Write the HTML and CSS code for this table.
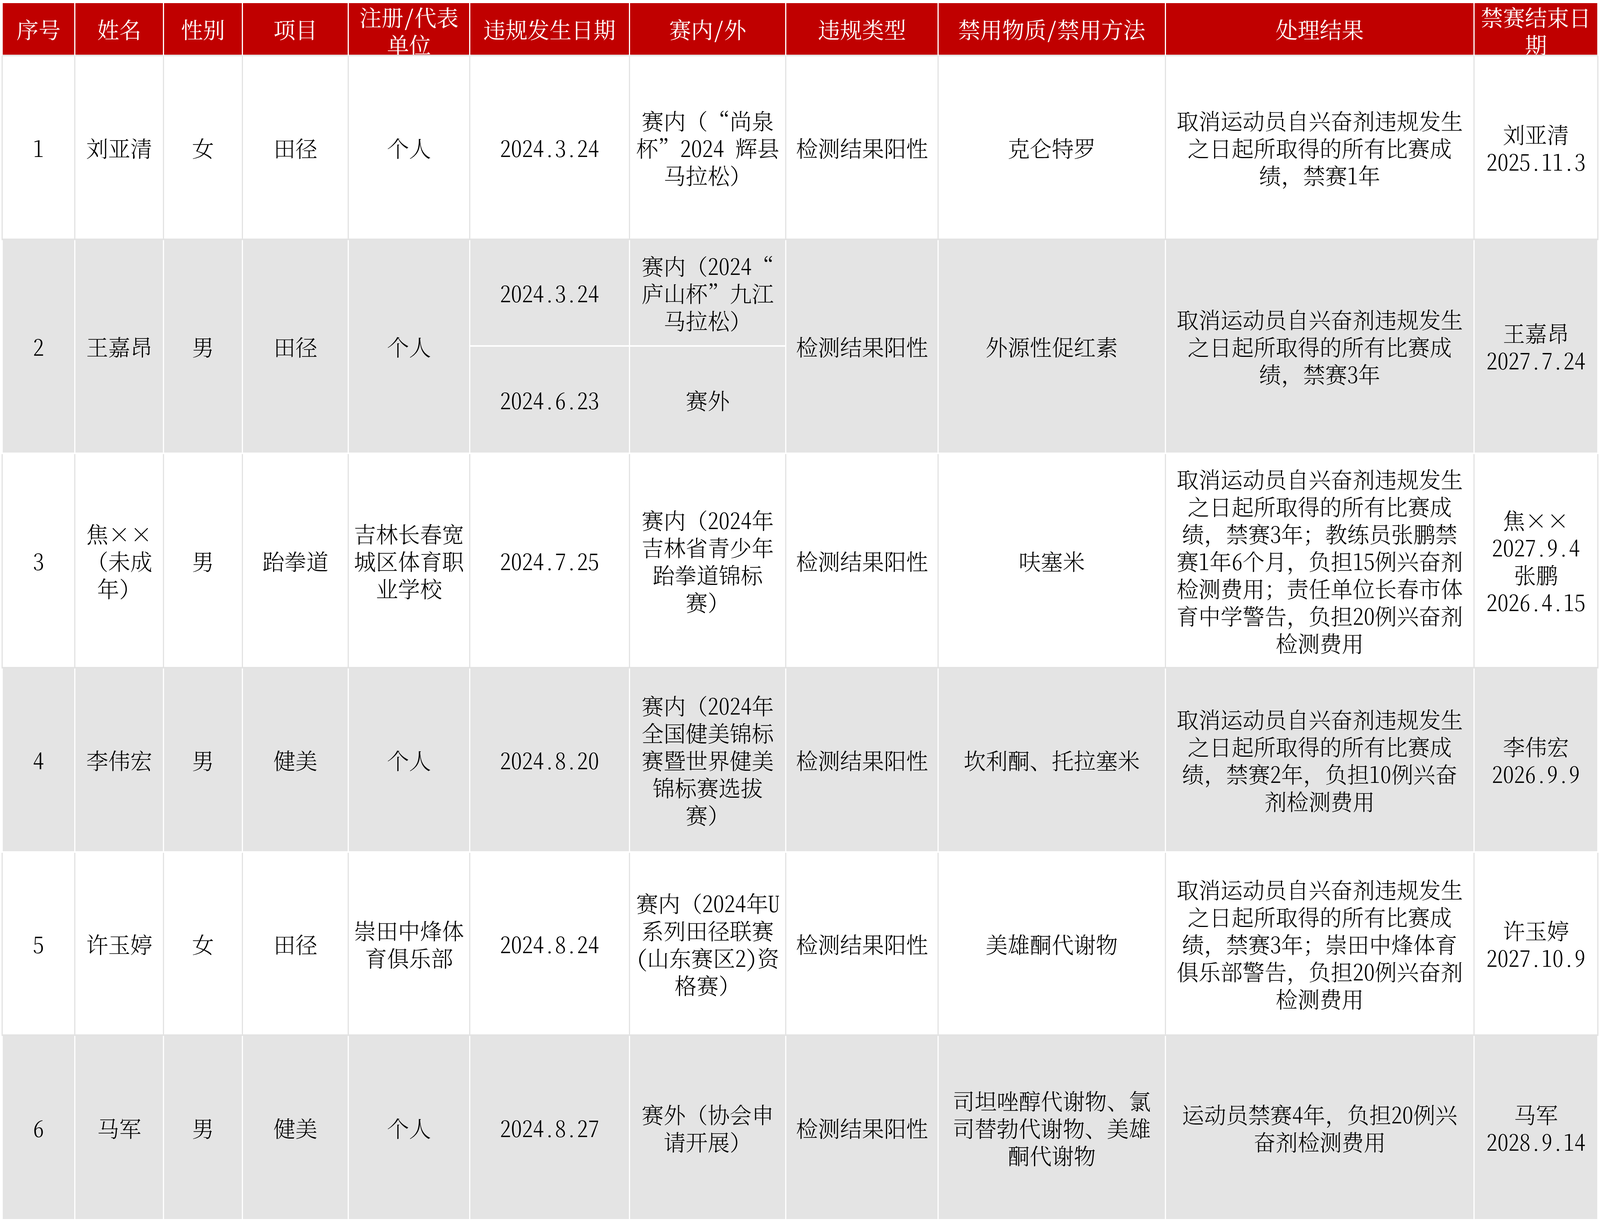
FILE: index.html
```html
<!DOCTYPE html>
<html lang="zh-CN">
<head>
<meta charset="utf-8">
<title>兴奋剂违规处理结果</title>
<link rel="stylesheet" href="styles.css">
</head>
<body>
<div class="sheet" role="table">
  <div class="row hd" role="row">
    <div class="c" role="columnheader"><p>序号</p></div>
    <div class="c" role="columnheader"><p>姓名</p></div>
    <div class="c" role="columnheader"><p>性别</p></div>
    <div class="c" role="columnheader"><p>项目</p></div>
    <div class="c hw" role="columnheader"><p>注册/代表单位</p></div>
    <div class="c" role="columnheader"><p>违规发生日期</p></div>
    <div class="c hw" role="columnheader"><p>赛内/外</p></div>
    <div class="c" role="columnheader"><p>违规类型</p></div>
    <div class="c hw" role="columnheader"><p>禁用物质/禁用方法</p></div>
    <div class="c res" role="columnheader"><p>处理结果</p></div>
    <div class="c" role="columnheader"><p>禁赛结束日期</p></div>
  </div>

  <div class="row w" role="row">
    <div class="c hw" role="cell"><p>1</p></div>
    <div class="c" role="cell"><p>刘亚清</p></div>
    <div class="c" role="cell"><p>女</p></div>
    <div class="c" role="cell"><p>田径</p></div>
    <div class="c" role="cell"><p>个人</p></div>
    <div class="c hw" role="cell"><p>2024.3.24</p></div>
    <div class="c" role="cell"><p>赛内（“尚泉杯”<span class="hw">2024 </span>辉县马拉松）</p></div>
    <div class="c" role="cell"><p>检测结果阳性</p></div>
    <div class="c" role="cell"><p>克仑特罗</p></div>
    <div class="c res" role="cell"><p>取消运动员自兴奋剂违规发生之日起所取得的所有比赛成绩，禁赛<span class="hw">1</span>年</p></div>
    <div class="c hw" role="cell"><p>刘亚清<br>2025.11.3</p></div>
  </div>

  <div class="row g" role="row">
    <div class="c hw span2" role="cell"><p>2</p></div>
    <div class="c span2" role="cell"><p>王嘉昂</p></div>
    <div class="c span2" role="cell"><p>男</p></div>
    <div class="c span2" role="cell"><p>田径</p></div>
    <div class="c span2" role="cell"><p>个人</p></div>
    <div class="c hw" role="cell"><p>2024.3.24</p></div>
    <div class="c" role="cell"><p>赛内（<span class="hw">2024</span>“<wbr>庐山杯”九江马拉松）</p></div>
    <div class="c span2" role="cell"><p>检测结果阳性</p></div>
    <div class="c span2" role="cell"><p>外源性促红素</p></div>
    <div class="c res span2" role="cell"><p>取消运动员自兴奋剂违规发生之日起所取得的所有比赛成绩，禁赛<span class="hw">3</span>年</p></div>
    <div class="c hw span2" role="cell"><p>王嘉昂<br>2027.7.24</p></div>
    <div class="c hw" role="cell"><p>2024.6.23</p></div>
    <div class="c" role="cell"><p>赛外</p></div>
  </div>

  <div class="row w" role="row">
    <div class="c hw" role="cell"><p>3</p></div>
    <div class="c" role="cell"><p>焦<span class="fw">×</span><span class="fw">×</span>（未成年）</p></div>
    <div class="c" role="cell"><p>男</p></div>
    <div class="c" role="cell"><p>跆拳道</p></div>
    <div class="c" role="cell"><p>吉林长春宽城区体育职业学校</p></div>
    <div class="c hw" role="cell"><p>2024.7.25</p></div>
    <div class="c" role="cell"><p>赛内（<span class="hw">2024</span>年吉林省青少年跆拳道锦标赛）</p></div>
    <div class="c" role="cell"><p>检测结果阳性</p></div>
    <div class="c" role="cell"><p>呋塞米</p></div>
    <div class="c res" role="cell"><p>取消运动员自兴奋剂违规发生之日起所取得的所有比赛成绩，禁赛<span class="hw">3</span>年；教练员张鹏禁赛<span class="hw">1</span>年<span class="hw">6</span>个月，负担<span class="hw">15</span>例兴奋剂检测费用；责任单位长春市体育中学警告，负担<span class="hw">20</span>例兴奋剂检测费用</p></div>
    <div class="c hw" role="cell"><p>焦<span class="fw">×</span><span class="fw">×</span><br>2027.9.4<br>张鹏<br>2026.4.15</p></div>
  </div>

  <div class="row g" role="row">
    <div class="c hw" role="cell"><p>4</p></div>
    <div class="c" role="cell"><p>李伟宏</p></div>
    <div class="c" role="cell"><p>男</p></div>
    <div class="c" role="cell"><p>健美</p></div>
    <div class="c" role="cell"><p>个人</p></div>
    <div class="c hw" role="cell"><p>2024.8.20</p></div>
    <div class="c" role="cell"><p>赛内（<span class="hw">2024</span>年全国健美锦标赛暨世界健美锦标赛选拔赛）</p></div>
    <div class="c" role="cell"><p>检测结果阳性</p></div>
    <div class="c" role="cell"><p>坎利酮、托拉塞米</p></div>
    <div class="c res" role="cell"><p>取消运动员自兴奋剂违规发生之日起所取得的所有比赛成绩，禁赛<span class="hw">2</span>年，负担<span class="hw">10</span>例兴奋剂检测费用</p></div>
    <div class="c hw" role="cell"><p>李伟宏<br>2026.9.9</p></div>
  </div>

  <div class="row w" role="row">
    <div class="c hw" role="cell"><p>5</p></div>
    <div class="c" role="cell"><p>许玉婷</p></div>
    <div class="c" role="cell"><p>女</p></div>
    <div class="c" role="cell"><p>田径</p></div>
    <div class="c" role="cell"><p>崇田中烽体育俱乐部</p></div>
    <div class="c hw" role="cell"><p>2024.8.24</p></div>
    <div class="c" role="cell"><p>赛内（<span class="hw">2024</span>年<span class="hw">U</span>系列田径联赛<span class="hw">(</span>山东赛区<span class="hw">2)</span>资格赛）</p></div>
    <div class="c" role="cell"><p>检测结果阳性</p></div>
    <div class="c" role="cell"><p>美雄酮代谢物</p></div>
    <div class="c res" role="cell"><p>取消运动员自兴奋剂违规发生之日起所取得的所有比赛成绩，禁赛<span class="hw">3</span>年；崇田中烽体育俱乐部警告，负担<span class="hw">20</span>例兴奋剂检测费用</p></div>
    <div class="c hw" role="cell"><p>许玉婷<br>2027.10.9</p></div>
  </div>

  <div class="row g" role="row">
    <div class="c hw" role="cell"><p>6</p></div>
    <div class="c" role="cell"><p>马军</p></div>
    <div class="c" role="cell"><p>男</p></div>
    <div class="c" role="cell"><p>健美</p></div>
    <div class="c" role="cell"><p>个人</p></div>
    <div class="c hw" role="cell"><p>2024.8.27</p></div>
    <div class="c" role="cell"><p>赛外（协会申请开展）</p></div>
    <div class="c" role="cell"><p>检测结果阳性</p></div>
    <div class="c" role="cell"><p>司坦唑醇代谢物、氯司替勃代谢物、美雄酮代谢物</p></div>
    <div class="c res" role="cell"><p>运动员禁赛<span class="hw">4</span>年，负担<span class="hw">20</span>例兴奋剂检测费用</p></div>
    <div class="c hw" role="cell"><p>马军<br>2028.9.14</p></div>
  </div>
</div>
</body>
</html>
```
FILE: styles.css
```css
:root {
  /* one reference pixel, horizontally and vertically */
  --x: calc(100vw / 4213);
  --y: calc(100vh / 3127);
}

html, body {
  margin: 0;
  padding: 0;
  background: #ffffff;
  overflow: hidden;
}

body {
  font-family: "Noto Serif CJK SC", "Noto Sans Mono CJK SC", "Noto Sans CJK SC", serif;
  color: #000000;
}

.sheet {
  display: grid;
  grid-template-columns:
    calc(195 * var(--x)) calc(233 * var(--x)) calc(208 * var(--x))
    calc(279 * var(--x)) calc(319 * var(--x)) calc(421 * var(--x))
    calc(412 * var(--x)) calc(401 * var(--x)) calc(598 * var(--x))
    calc(813 * var(--x)) calc(326 * var(--x));
  grid-template-rows:
    calc(140 * var(--y)) calc(471 * var(--y)) calc(273 * var(--y))
    calc(275 * var(--y)) calc(549 * var(--y)) calc(472 * var(--y))
    calc(469 * var(--y)) calc(473 * var(--y));
  margin: calc(4 * var(--y)) 0 0 calc(4 * var(--x));
}

.row {
  display: contents;
}

.c {
  box-sizing: border-box;
  display: flex;
  justify-content: center;
  min-width: 0;
  overflow: hidden;
  padding: 0 calc(10 * var(--x));
  border-right: calc(4 * var(--x)) solid #e3e3e3;
  border-bottom: calc(4 * var(--y)) solid #e3e3e3;
  font-size: calc(58 * var(--x));
  line-height: calc(70 * var(--y));
  font-weight: 300;
  text-align: center;
  text-spacing-trim: space-all;
}

.c > p {
  margin: auto 0;
}

.row > .c:first-child {
  border-left: calc(4 * var(--x)) solid #e3e3e3;
}

.c.res {
  padding: 0 calc(20 * var(--x));
}

.span2 {
  grid-row: span 2;
}

/* half-width Latin letters and digits, as in the source document */
.hw {
  font-feature-settings: "hwid" 1;
}

/* full-width multiplication sign */
.fw {
  display: inline-block;
  width: 1em;
  text-align: center;
}

/* header */
.hd > .c {
  background: #c00000;
  color: #ffffff;
  font-weight: 400;
  border-top: calc(4 * var(--y)) solid #ffffff;
  border-right-color: #ffffff;
  border-bottom-color: #e5e5e5;
}

.hd > .c:first-child {
  border-left-color: #ffffff;
}

/* white rows */
.w > .c {
  background: #ffffff;
}

/* grey rows */
.g > .c {
  background: #e4e4e4;
  border-right-color: #ffffff;
  border-bottom-color: #ffffff;
}

.g > .c:first-child {
  border-left-color: #ffffff;
}
```
